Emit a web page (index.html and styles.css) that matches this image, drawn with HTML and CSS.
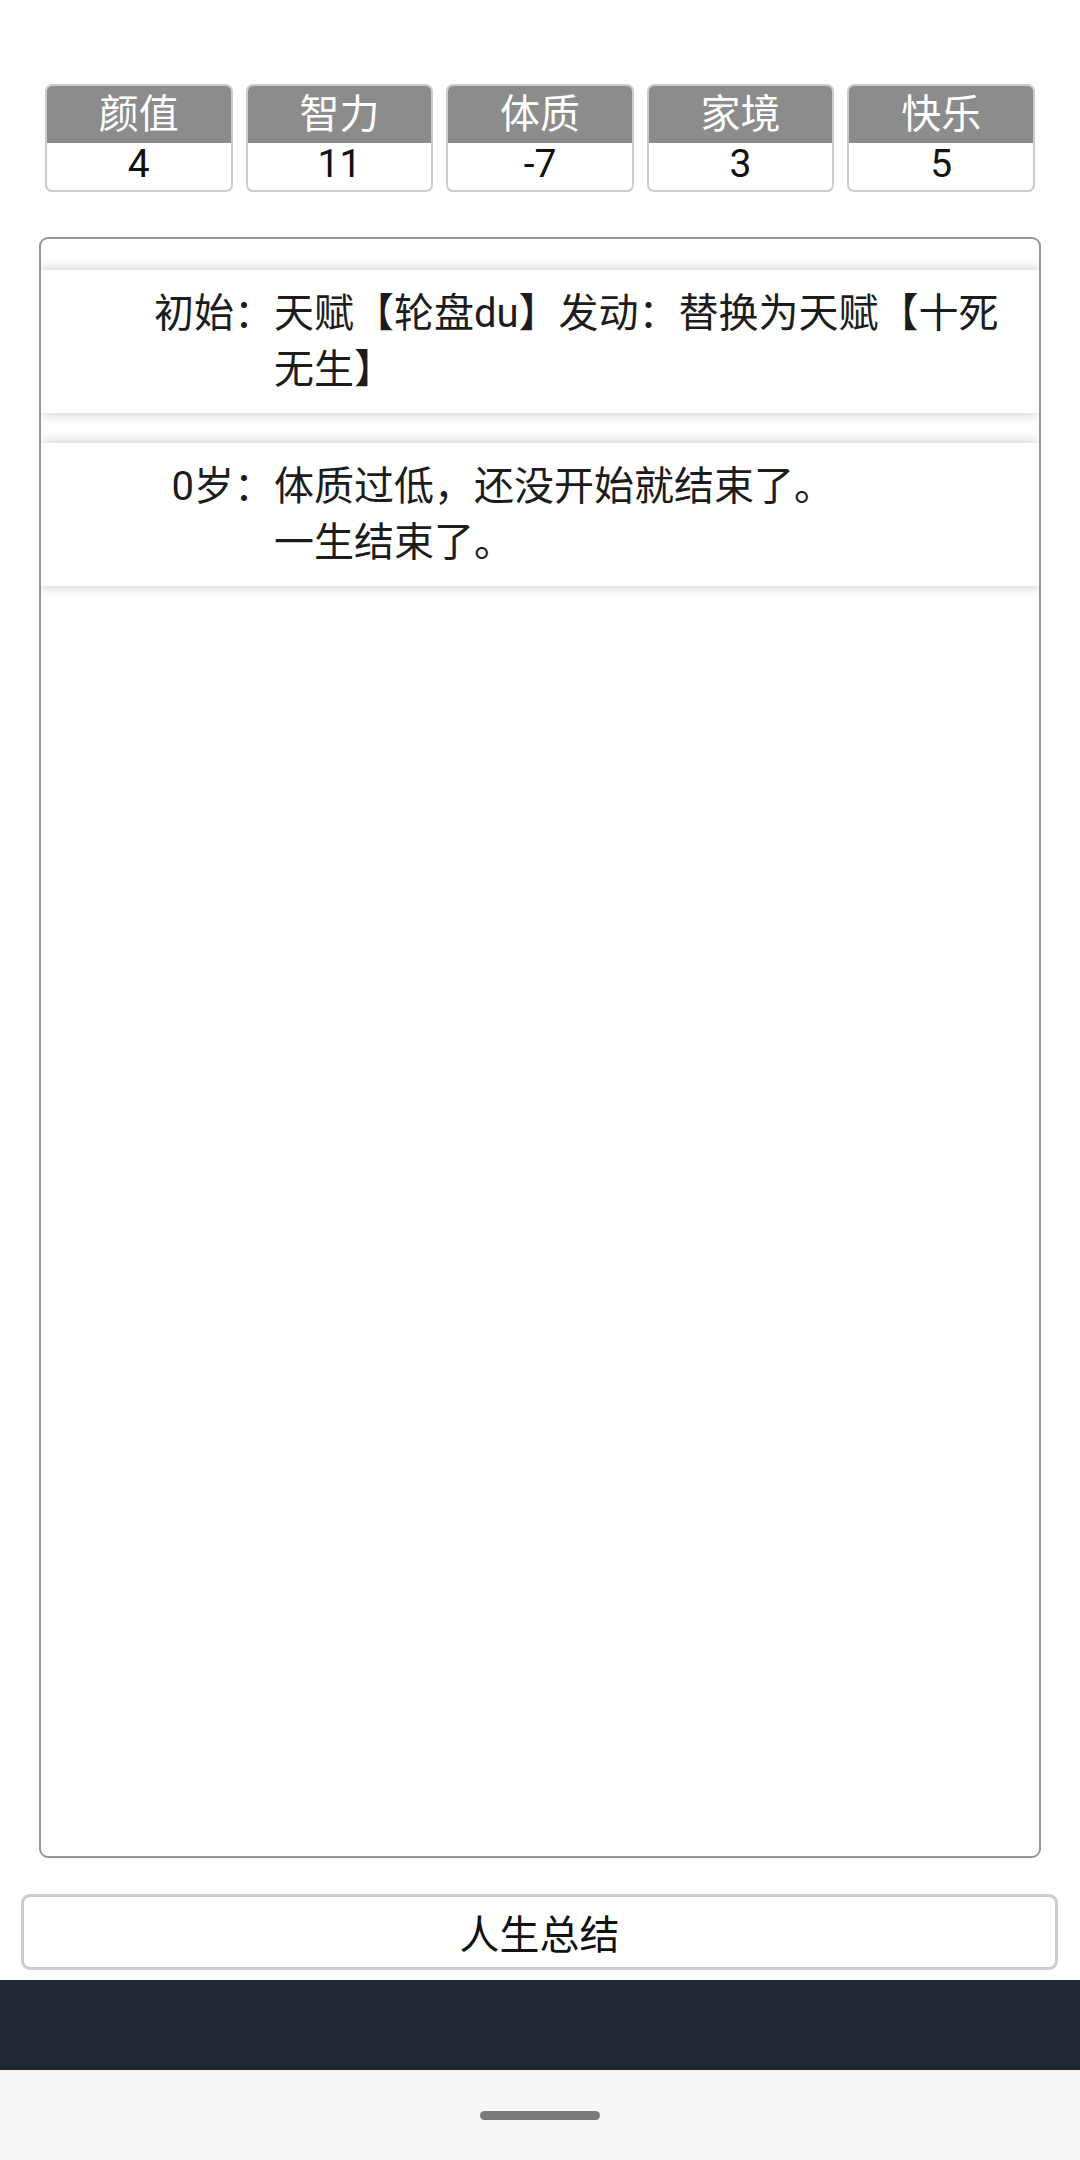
FILE: index.html
```
<!DOCTYPE html>
<html lang="zh-CN">
<head>
<meta charset="utf-8">
<title>人生重开</title>
<link rel="stylesheet" href="styles.css">
</head>
<body>
<div class="page">
  <div class="stats">
    <div class="stat"><div class="stat-name">颜值</div><div class="stat-val">4</div></div>
    <div class="stat"><div class="stat-name">智力</div><div class="stat-val">11</div></div>
    <div class="stat"><div class="stat-name">体质</div><div class="stat-val">-7</div></div>
    <div class="stat"><div class="stat-name">家境</div><div class="stat-val">3</div></div>
    <div class="stat"><div class="stat-name">快乐</div><div class="stat-val">5</div></div>
  </div>
  <div class="panel">
    <ul class="log">
      <li class="entry">
        <span class="entry-label">初始：</span>
        <span class="entry-text">天赋【轮盘du】发动：替换为天赋【十死无生】</span>
      </li>
      <li class="entry">
        <span class="entry-label">0岁：</span>
        <span class="entry-text"><span class="line">体质过低，还没开始就结束了。</span><span class="line">一生结束了。</span></span>
      </li>
    </ul>
  </div>
  <button class="summary-btn">人生总结</button>
  <div class="dark-bar"></div>
  <div class="nav-bar"><div class="nav-pill"></div></div>
</div>
</body>
</html>
```
FILE: styles.css
```
html, body {
  margin: 0;
  padding: 0;
  background: #ffffff;
}
body {
  font-family: Roboto, "Noto Sans CJK SC", sans-serif;
  width: 1080px;
  height: 2160px;
  overflow: hidden;
}
.page {
  display: flex;
  flex-direction: column;
  height: 2160px;
}
.stats {
  display: flex;
  gap: 13px;
  padding: 84px 45px 0;
}
.stat {
  flex: 1;
  border: 2px solid #cccccc;
  border-radius: 7px;
  overflow: hidden;
  text-align: center;
  background: #fff;
}
.stat-name {
  height: 57px;
  line-height: 57px;
  background: #8c8c8c;
  color: #ffffff;
  font-size: 40px;
}
.stat-val {
  height: 47px;
  line-height: 42px;
  color: #111;
  font-size: 39px;
}
.panel {
  margin: 45px 39px 0;
  height: 1621px;
  box-sizing: border-box;
  border: 2px solid #959595;
  border-radius: 9px;
  overflow: hidden;
  background: #fff;
}
.log {
  list-style: none;
  margin: 0;
  padding: 31px 0 0;
  display: flex;
  flex-direction: column;
  gap: 30px;
}
.entry {
  display: grid;
  grid-template-columns: 233px 1fr;
  padding: 16px 20px 15px 0;
  background: #fff;
  box-shadow: 0 0 12px rgba(0, 0, 0, 0.24);
  font-size: 40px;
  line-height: 56px;
  color: #1c1c1c;
}
.entry-label {
  text-align: right;
}
.line {
  display: block;
}
.summary-btn {
  margin: 36px 22px 0 21px;
  height: 76px;
  box-sizing: border-box;
  border: 3px solid #cccccc;
  border-radius: 9px;
  background: #ffffff;
  font-family: Roboto, "Noto Sans CJK SC", sans-serif;
  font-size: 40px;
  color: #111;
  padding: 0;
}
.dark-bar {
  margin-top: 10px;
  height: 90px;
  background: #222831;
}
.nav-bar {
  height: 90px;
  background: #f6f6f6;
  display: flex;
  justify-content: center;
  padding-top: 41px;
  box-sizing: border-box;
}
.nav-pill {
  width: 120px;
  height: 9px;
  border-radius: 5px;
  background: #7a7a7a;
}
```
